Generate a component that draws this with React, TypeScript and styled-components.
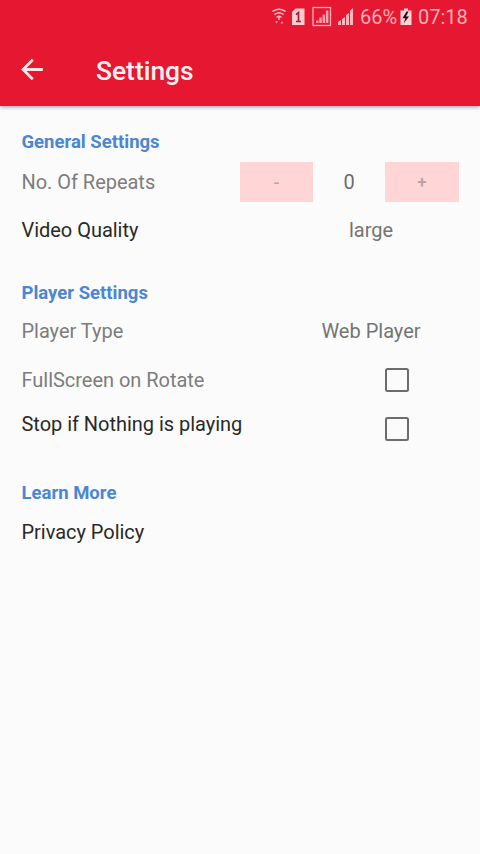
import React from "react";
import styled, { createGlobalStyle } from "styled-components";

const GlobalStyle = createGlobalStyle`
  * { box-sizing: border-box; }
  body { margin: 0; background: #fbfbfb; }
`;

const Screen = styled.div`
  display: flex;
  flex-direction: column;
  width: 480px;
  height: 854px;
  background: #fbfbfb;
  font-family: Roboto, sans-serif;
  overflow: hidden;
`;

const Header = styled.header`
  flex: none;
  height: 106px;
  background: #e61731;
  box-shadow: 0 1px 4px rgba(0, 0, 0, 0.38);
`;

const StatusBar = styled.div`
  display: flex;
  align-items: center;
  height: 34px;
  padding-left: 271px;
  color: #ffb0b8;
`;

const StatusText = styled.span<{ $width: number }>`
  width: ${(p) => p.$width}px;
  font-size: 20px;
  line-height: 34px;
  white-space: nowrap;
`;

const Toolbar = styled.div`
  display: flex;
  align-items: center;
  height: 72px;
  padding-left: 21px;
`;

const BackButton = styled.button`
  display: flex;
  width: 75px;
  padding: 0;
  border: 0;
  background: none;
`;

const Title = styled.h1`
  margin: 2px 0 0;
  color: #fff0f1;
  font-size: 26.4px;
  font-weight: 500;
  line-height: 32px;
`;

const Content = styled.main`
  padding: 22px 21px 0 21.5px;
`;

const Section = styled.section<{ $gap: number }>`
  margin-bottom: ${(p) => p.$gap}px;
`;

const SectionTitle = styled.h2`
  margin: 0;
  color: #4a86d4;
  font-size: 18.5px;
  font-weight: 700;
  line-height: 28px;
`;

const Row = styled.div<{ $height: number }>`
  display: grid;
  grid-template-columns: 218.5px 219px;
  align-items: center;
  height: ${(p) => p.$height}px;
`;

const Label = styled.span<{ $muted?: boolean; $raise?: number }>`
  padding-bottom: ${(p) => p.$raise ?? 0}px;
  color: ${(p) => (p.$muted ? "#7d7d7d" : "#292929")};
  font-size: 20px;
  letter-spacing: -0.03px;
  line-height: 26px;
  white-space: nowrap;
`;

const Value = styled.span`
  padding-left: 43px;
  color: #747474;
  font-size: 20px;
  line-height: 26px;
  text-align: center;
`;

const Stepper = styled.div`
  display: grid;
  grid-template-columns: 73px 72px 74px;
  align-items: center;
  justify-items: stretch;
`;

const StepButton = styled.button`
  height: 40px;
  padding: 0;
  border: 0;
  background: #ffd5d6;
  color: #b9a0a1;
  font: 500 17px/40px Roboto, sans-serif;
`;

const Count = styled.span`
  color: #6b6b6b;
  font-size: 20px;
  line-height: 40px;
  text-align: center;
`;

const Checkbox = styled.input`
  appearance: none;
  width: 24px;
  height: 24px;
  margin: 0 0 0 145px;
  border: 2px solid #6c6c6c;
  border-radius: 2.5px;
`;

const StatusIcons = () => (
  <svg width="89" height="34" viewBox="271 0 89 34" fill="none">
    <g stroke="#ffbcc2" strokeWidth="1.5" strokeLinecap="round">
      <path d="M273 11.2Q279 7.2 285 11.2M275 14.2Q279 11.3 283 14.2M277 17Q279 15.4 281 17" />
      <path d="M279 17.5V19.5" />
    </g>
    <path d="M275 21.3h3l-1.5 2.5zM280.5 23.5h3L282 21z" fill="#f78791" />
    <path d="M295.5 8.5H304.5V25H292V12z" fill="#ffccd0" />
    <path d="M296 14.5L298.5 12.5V21.5M296 21.5H301" stroke="#a91d31" strokeWidth="1.7" />
    <rect x="313" y="7.5" width="17.5" height="18" stroke="#ffb4bb" strokeWidth="1.3" />
    <path d="M316 20.5h2.5V23H316zM319.3 17.5h2.5V23h-2.5zM322.6 14.5h2.5V23h-2.5zM325.9 10.5h2.5V23h-2.5z" fill="#ffa1aa" />
    <path d="M338 22l3-2v5h-3zM342 19l3-2v8h-3zM346 15l3-2v12h-3zM350 10.5l3-2.5v17h-3z" fill="#ffb4bb" />
  </svg>
);

const BatteryIcon = () => (
  <svg width="21" height="34" viewBox="397 0 21 34">
    <path d="M404 8.5h4v2h3.5V25H400.500V10.5H404z" fill="#ffd3d5" />
    <path d="M406.5 11.5L402.5 18.3H405.5L403.5 23.5L409 16.5H406L408.5 11.5z" fill="#28080d" />
  </svg>
);

const BackIcon = () => (
  <svg width="24" height="26" viewBox="0 0 24 26" fill="none" stroke="#ffe4e6" strokeWidth="2.8">
    <path d="M21.8 12.5H2.5M11.8 2.8L2.1 12.5L11.8 22.2" />
  </svg>
);

export default function App() {
  return (
    <>
      <GlobalStyle />
      <Screen>
        <Header>
          <StatusBar>
            <StatusIcons />
            <StatusText $width={37}>66%</StatusText>
            <BatteryIcon />
            <StatusText $width={55}>07:18</StatusText>
          </StatusBar>
          <Toolbar>
            <BackButton aria-label="Back"><BackIcon /></BackButton>
            <Title>Settings</Title>
          </Toolbar>
        </Header>
        <Content>
          <Section $gap={27}>
            <SectionTitle>General Settings</SectionTitle>
            <Row $height={52}>
              <Label $muted>No. Of Repeats</Label>
              <Stepper>
                <StepButton disabled>-</StepButton>
                <Count>0</Count>
                <StepButton disabled>+</StepButton>
              </Stepper>
            </Row>
            <Row $height={44}>
              <Label>Video Quality</Label>
              <Value>large</Value>
            </Row>
          </Section>
          <Section $gap={26}>
            <SectionTitle>Player Settings</SectionTitle>
            <Row $height={48}>
              <Label $muted>Player Type</Label>
              <Value>Web Player</Value>
            </Row>
            <Row $height={49}>
              <Label $muted>FullScreen on Rotate</Label>
              <Checkbox type="checkbox" />
            </Row>
            <Row $height={49}>
              <Label $raise={10}>Stop if Nothing is playing</Label>
              <Checkbox type="checkbox" />
            </Row>
          </Section>
          <Section $gap={0}>
            <SectionTitle>Learn More</SectionTitle>
            <Row $height={49}>
              <Label>Privacy Policy</Label>
            </Row>
          </Section>
        </Content>
      </Screen>
    </>
  );
}
